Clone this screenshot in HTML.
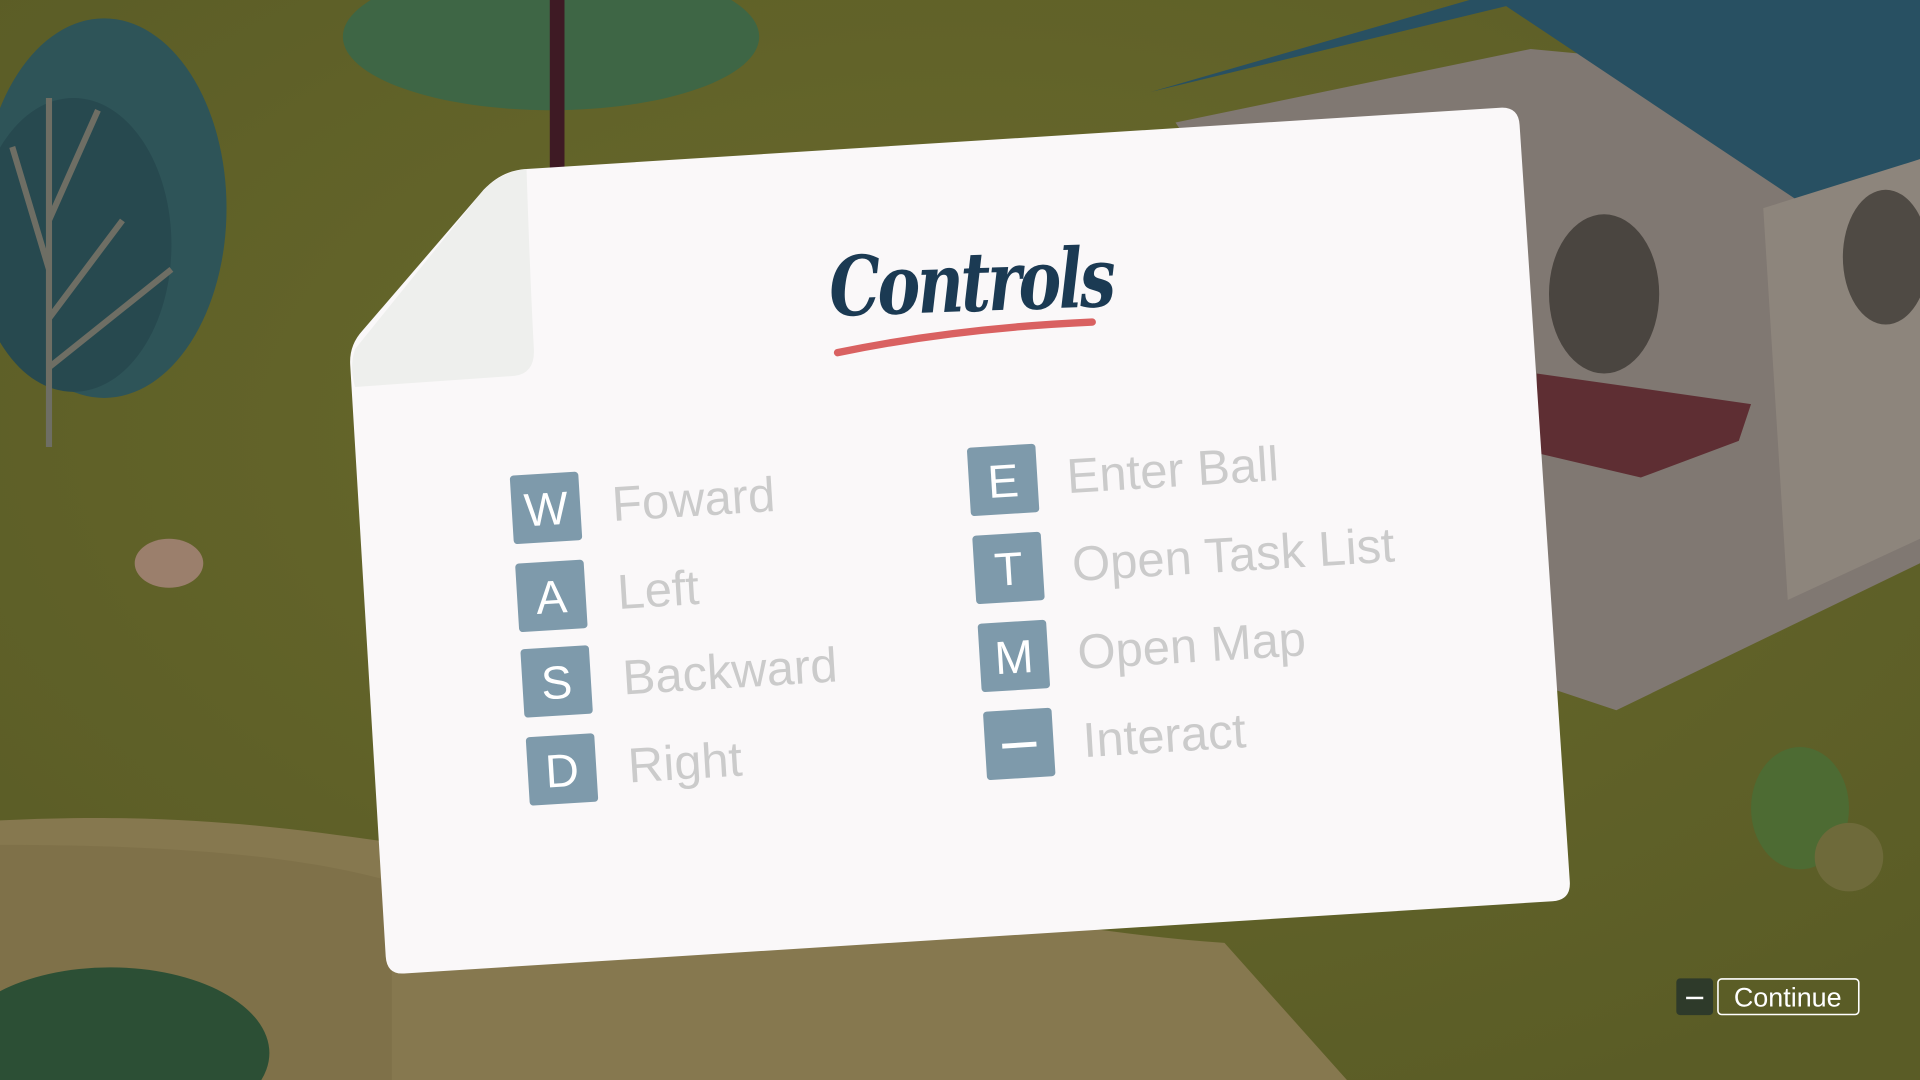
<!DOCTYPE html>
<html><head><meta charset="utf-8"><style>html,body{margin:0;padding:0;width:1920px;height:1080px;overflow:hidden;background:#5f6128}svg{display:block}</style></head>
<body>
<svg width="1920" height="1080" viewBox="0 0 1568 882" preserveAspectRatio="none" xmlns="http://www.w3.org/2000/svg">
<defs>
<radialGradient id="g1" cx="0.5" cy="0.4" r="0.7"><stop offset="0" stop-color="#6a6a2c"/><stop offset="1" stop-color="#5a5c26"/></radialGradient>
</defs>
<rect width="1568" height="882" fill="url(#g1)"/>
<path d="M0 670 C200 660 300 690 420 700 C700 720 850 760 1000 770 L1100 882 L0 882 Z" fill="#86784f"/>
<path d="M0 690 C150 690 250 700 320 720 L320 882 L0 882Z" fill="#7f7149"/>
<ellipse cx="85" cy="170" rx="100" ry="155" fill="#2e5458"/>
<ellipse cx="60" cy="200" rx="80" ry="120" fill="#27494f"/>
<path d="M40 365 L40 80 M40 260 L100 180 M40 220 L10 120 M40 300 L140 220 M40 180 L80 90" stroke="#6e6e64" stroke-width="5" fill="none"/>
<ellipse cx="450" cy="30" rx="170" ry="60" fill="#3e6645"/>
<path d="M455 140 L455 0" stroke="#3e1a24" stroke-width="12"/>
<ellipse cx="90" cy="860" rx="130" ry="70" fill="#2c4f35"/>
<ellipse cx="138" cy="460" rx="28" ry="20" fill="#9b7f6c"/>
<polygon points="960,100 1250,40 1568,70 1568,460 1320,580 1260,560 960,100" fill="#807872"/>
<polygon points="940,75 1230,5 1470,165 1568,130 1568,0 1200,0" fill="#285062"/>
<polygon points="1440,170 1568,130 1568,440 1460,490" fill="#8d857c"/>
<ellipse cx="1310" cy="240" rx="45" ry="65" fill="#4a4540"/>
<ellipse cx="1540" cy="210" rx="35" ry="55" fill="#4f4a44"/>
<polygon points="1255,305 1430,330 1420,360 1340,390 1255,370" fill="#5e2e33"/>
<ellipse cx="1470" cy="660" rx="40" ry="50" fill="#4d6b33"/>
<ellipse cx="1510" cy="700" rx="28" ry="28" fill="#6e6a3a"/>
<path d="M430 138 L1225 88 Q1240 87 1241 102 L1282 720 Q1283 735 1268 736 L330 795 Q316 796 315 781 L286 298 Q285 282 296 270 L395 155 Q410 139 430 138 Z" fill="#faf8f9"/>
<path d="M430 138 Q433 230 436 285 Q437 305 420 307 L290 316 Q285 300 290 285 L395 155 Q410 140 430 138Z" fill="#eeefed"/>
<text x="0" y="0" font-family="DejaVu Serif, serif" font-style="italic" font-weight="bold" font-size="64" fill="#1b3a53" letter-spacing="-3" transform="translate(678 258) rotate(-2) scale(0.82 1.05)">Controls</text>
<path d="M684 288 Q780 268 892 263" stroke="#d96161" stroke-width="6" fill="none" stroke-linecap="round"/>
<g transform="translate(6 -44) rotate(-3.5 780 450)" font-family="Liberation Sans, sans-serif">
<g fill="#7e9aab">
<rect x="412" y="410" width="56" height="56" rx="3"/>
<rect x="412" y="482" width="56" height="56" rx="3"/>
<rect x="412" y="552" width="56" height="56" rx="3"/>
<rect x="412" y="624" width="56" height="56" rx="3"/>
<rect x="786" y="410" width="56" height="56" rx="3"/>
<rect x="786" y="482" width="56" height="56" rx="3"/>
<rect x="786" y="554" width="56" height="56" rx="3"/>
<rect x="786" y="626" width="56" height="56" rx="3"/>
</g>
<g fill="#fff" font-size="38" text-anchor="middle">
<text x="440" y="452">W</text><text x="440" y="524">A</text><text x="440" y="594">S</text><text x="440" y="666">D</text>
<text x="814" y="452">E</text><text x="814" y="524">T</text><text x="814" y="596">M</text>
</g>
<rect x="800" y="653" width="28" height="4" fill="#fff"/>
<g fill="#cbcbcb" font-size="40">
<text x="494" y="452">Foward</text><text x="494" y="524">Left</text><text x="494" y="594">Backward</text><text x="494" y="666">Right</text>
<text x="866" y="452">Enter Ball</text><text x="866" y="524">Open Task List</text><text x="866" y="596">Open Map</text><text x="866" y="668">Interact</text>
</g>
</g>
<rect x="1369" y="799" width="30" height="30" rx="3" fill="#2e3a2a"/>
<rect x="1377" y="814" width="14" height="2" fill="#fff"/>
<rect x="1403" y="799.5" width="115" height="29" rx="3" fill="none" stroke="#fff" stroke-width="1.3"/>
<text x="1460" y="822" text-anchor="middle" font-family="Liberation Sans, sans-serif" font-size="22" fill="#fff">Continue</text>
</svg>
</body></html>
